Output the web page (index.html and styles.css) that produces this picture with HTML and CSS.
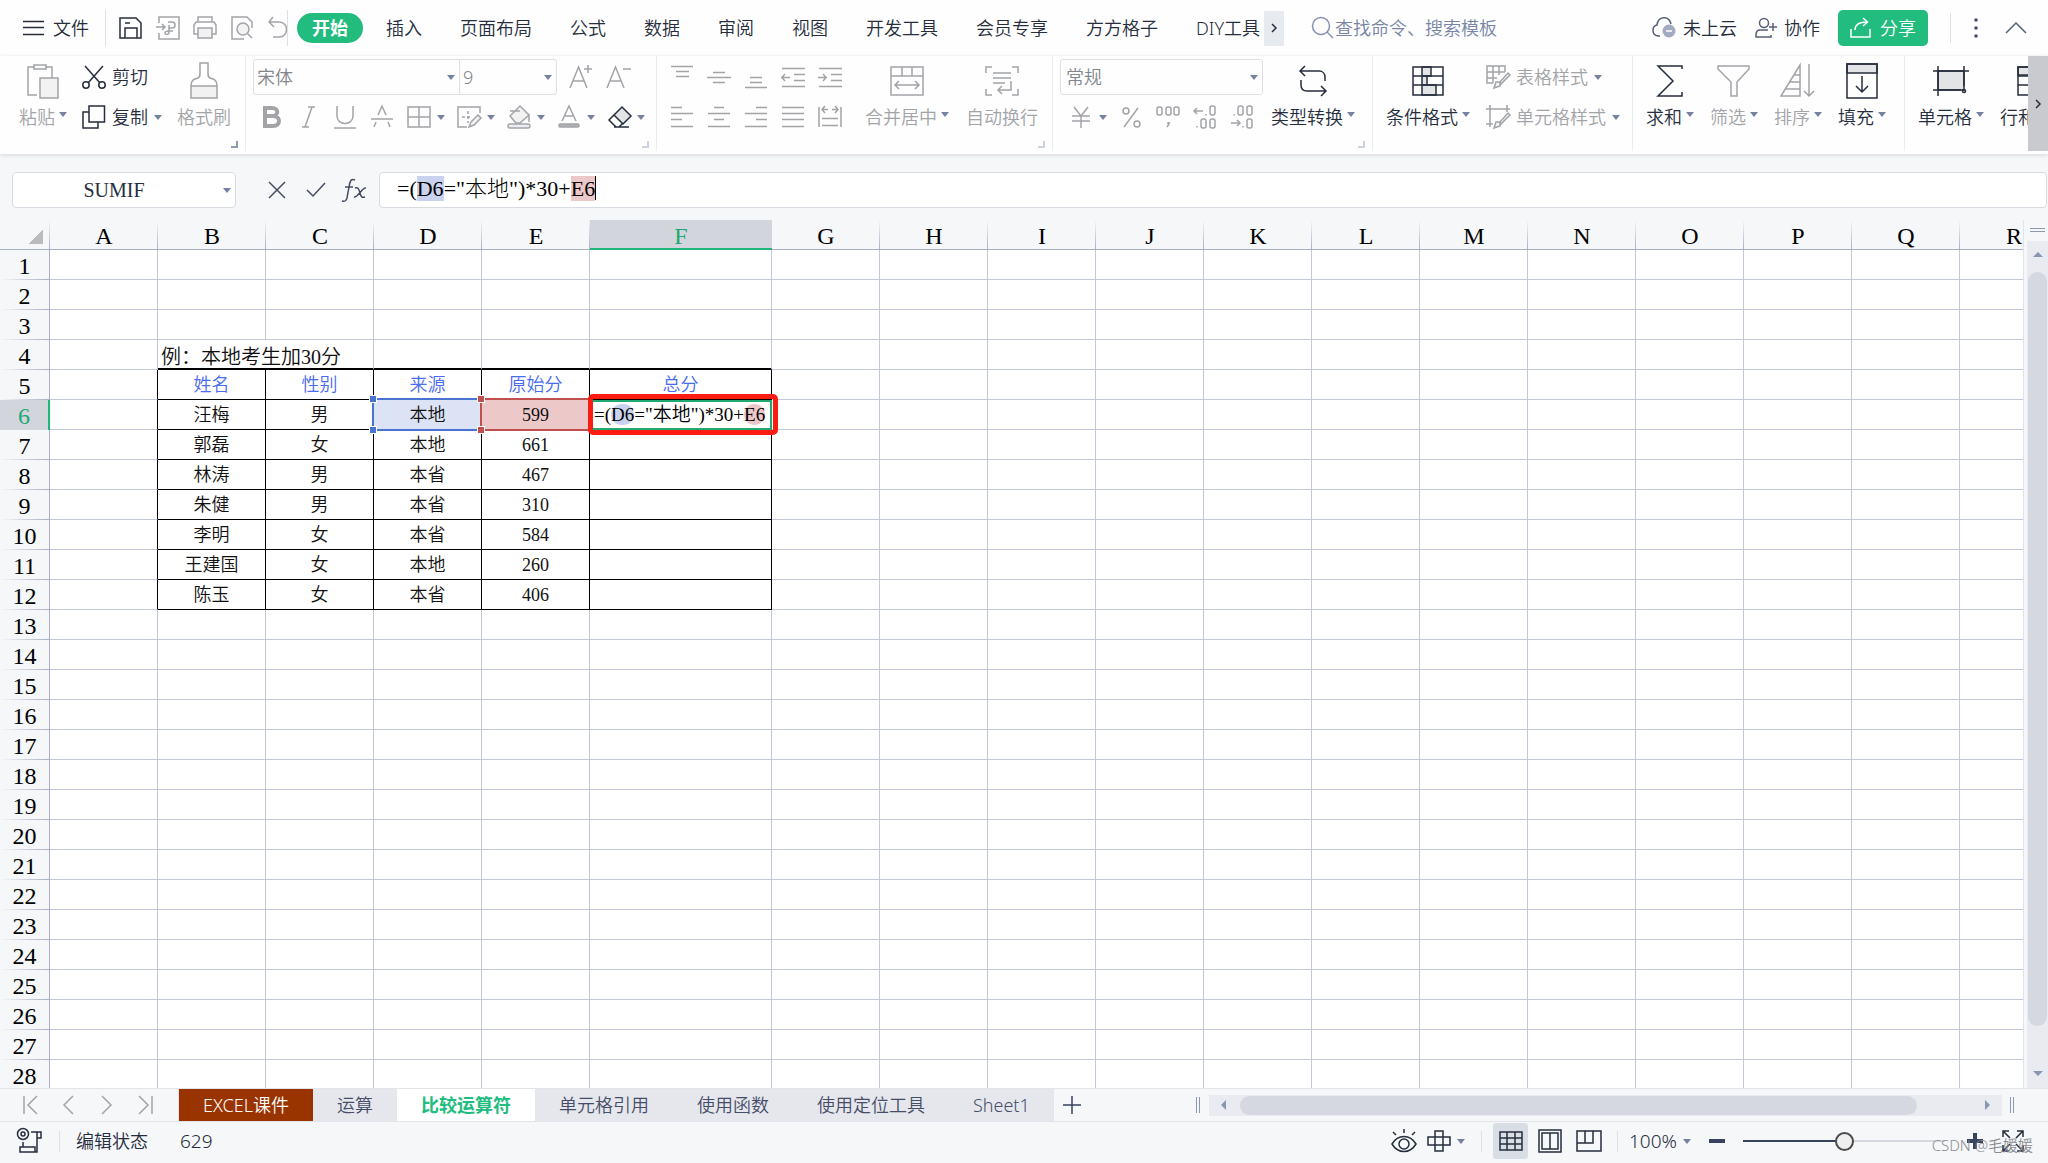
FILE: index.html
```html
<!DOCTYPE html>
<html lang="zh-CN">
<head>
<meta charset="utf-8">
<title>比较运算符 - 表格</title>
<link rel="stylesheet" href="styles.css">
</head>
<body>
<div class="app">

<header class="menu">
  <button class="file-btn dark"><svg class="ic" width="22" height="24"><path d="M0 5.500h21M0 11.500h21M0 18.500h21"/></svg>文件</button>
  <div class="quick">
    <button class="dark" aria-label="保存"><svg class="ic" width="24" height="24"><path d="M1 2h16l5 5v15H1zM6 22V12h12v10M6 7h5"/></svg></button>
    <button aria-label="输出为PDF"><svg class="ic" width="24" height="24"><path d="M3 7V1h20v22H3v-6M0 11h9M6 8l3 3-3 3M12 6h4c4 0 4 6 0 6h-3V9M13 12v4c0 3-4 3-4 1s2-2 4-2h4"/></svg></button>
    <button aria-label="打印"><svg class="ic" width="24" height="24"><path d="M5 6V1h14v5M5 18H1V9l2-3h18l2 3v9h-4"/><path class="tint" d="M5 12h14v10H5z"/></svg></button>
    <button aria-label="打印预览"><svg class="ic" width="24" height="24"><path d="M14 23H2V1h15l5 5v6"/><circle class="tint" cx="13" cy="13" r="6"/><path d="M17.500 17.500 22 22"/></svg></button>
    <button aria-label="撤销"><svg class="ic" width="24" height="24"><path d="M6 1 2 6l5 5M2 6h10c10 0 10 15 0 15H6"/></svg></button>
  </div>
  <nav class="tabs">
    <a class="tab on" href="#">开始</a><a class="tab" href="#">插入</a><a class="tab" href="#">页面布局</a><a class="tab" href="#">公式</a><a class="tab" href="#">数据</a><a class="tab" href="#">审阅</a><a class="tab" href="#">视图</a><a class="tab" href="#">开发工具</a><a class="tab" href="#">会员专享</a><a class="tab" href="#">方方格子</a><a class="tab last" href="#">DIY工具</a>
  </nav>
  <button class="more dark" aria-label="更多选项卡"><svg class="ic" width="8" height="10"><path d="m2 1 4 4-4 4"/></svg></button>
  <label class="search"><svg class="ic" width="22" height="24"><circle cx="10" cy="10" r="8.500"/><path d="m16 16 6 6"/></svg><input type="text" placeholder="查找命令、搜索模板" aria-label="查找命令"></label>
  <div class="account">
    <button class="dark"><svg class="ic slate" width="24" height="24"><path d="M8 20H6C-1 19 0 10 5 9 6 0 17-1 19 8"/><circle cx="17" cy="15" r="6.500" fill="#a3abc0" stroke="none"/><path d="M14 15h6" stroke="#fff"/></svg>未上云</button>
    <button class="dark"><svg class="ic slate" width="22" height="24"><circle cx="9" cy="7" r="4.500"/><path d="M13 14H5c-3 0-4 2-4 5v2h15v-2M14 11h8M18 7v8"/></svg>协作</button>
    <button class="share"><svg class="ic" width="21" height="22"><path d="M1 12v8h19v-8M5 13C5 8 9 5 17 5M13 1l4.500 4-4.500 4"/></svg>分享</button>
    <span class="vline"></span>
    <button class="slim dark" aria-label="更多"><svg width="6" height="24"><circle cx="3" cy="4" r="1.800"/><circle cx="3" cy="12" r="1.800"/><circle cx="3" cy="20" r="1.800"/></svg></button>
    <button class="slim" aria-label="收起功能区"><svg class="ic slate" width="22" height="14"><path d="m1 12 10-10 10 10"/></svg></button>
  </div>
</header>

<div class="ribbon">
  <div class="groups">
  <section class="group clip">
    <button class="tile"><span class="big"><svg class="ic" width="34" height="36"><path d="M11 32H2V4h6M20 4h6v11M8 2h12v4H8z"/><path class="tint" d="M14 15h18v20H14z"/></svg></span><span class="cap">粘贴<i class="caret"></i></span></button>
    <div class="stack">
      <button class="item dark"><svg class="ic" width="24" height="24"><path d="M3 1l15 17M21 1 6 18"/><circle cx="4" cy="20" r="3.200"/><circle cx="20" cy="20" r="3.200"/></svg>剪切</button>
      <button class="item dark"><svg class="ic" width="24" height="24"><path d="M7 7H1v16h15v-6M7 1h15.500v16H7z"/></svg>复制<i class="caret"></i></button>
    </div>
    <button class="tile"><span class="big"><svg class="ic" width="30" height="38"><path class="tint" d="M2 24h26v12H2z"/><path d="M2 24c0-6 3-7 7-8 2-1 2-2 2-5V1h8v10c0 3 0 4 2 5 4 1 7 2 7 8"/></svg></span><span class="cap">格式刷</span></button>
    <i class="launch strong"></i>
  </section>

  <section class="group font">
    <div class="rows">
      <div class="line">
        <div class="fontbox">
          <span class="drop wide"><select aria-label="字体"><option>宋体</option></select></span><span class="drop"><select aria-label="字号"><option>9</option></select></span>
        </div>
        <button class="sq" aria-label="增大字号"><svg class="ic" width="24" height="24"><path d="M1 23 9.500 2 18 23M4 16h11M15 4h8M19 0v8"/></svg></button>
        <button class="sq" aria-label="减小字号"><svg class="ic" width="25" height="24"><path d="M1 23 9.500 2 18 23M4 16h11M17 4h8"/></svg></button>
      </div>
      <div class="line icons">
        <button class="sq" aria-label="加粗"><svg class="ic heavy" width="24" height="24"><path d="M6 3h7c7 0 7 8 0 8H6zM6 11h8c8 0 8 10 0 10H6z"/></svg></button>
        <button class="sq" aria-label="倾斜"><svg class="ic" width="24" height="24"><path d="M12 2h7M6 22h7M16 2 9 22"/></svg></button>
        <button class="sq" aria-label="下划线"><svg class="ic" width="24" height="24"><path d="M4 1v10c0 10 16 10 16 0V1M1 23h22"/></svg></button>
        <button class="sq" aria-label="删除线"><svg class="ic" width="24" height="24"><path d="M8 10l4-9 4 9M1 14h22M6 17l-2 5M18 17l2 5"/></svg></button>
        <button class="sq dd" aria-label="边框"><svg class="ic" width="24" height="24"><path d="M1 2h22v20H1zM12 2v20M1 12h22"/></svg><i class="caret"></i></button>
        <button class="sq dd" aria-label="绘图边框"><svg class="ic" width="24" height="24"><path d="M1 20V2h22v6M1 20v2h9"/><path d="M11 6v12M5 12h10" stroke-dasharray="3 2"/><path class="tint" d="m12 22 2-5 7-7 3 3-7 7z"/></svg><i class="caret"></i></button>
        <button class="sq dd" aria-label="填充颜色"><svg class="ic" width="24" height="24"><path class="tint" d="m3 11 10-10 9 9-9 8h-4zM3 6h10M22 9v8"/><rect x="1" y="19" width="22" height="4" rx="2" fill="#eceef2"/></svg><i class="caret"></i></button>
        <button class="sq dd" aria-label="字体颜色"><svg class="ic" width="24" height="24"><path d="m5 16 7-15 7 15M8 11h8"/><rect x="2" y="19" width="20" height="3" rx="1" fill="#b0b2b4"/></svg><i class="caret"></i></button>
        <button class="sq dd dark" aria-label="清除"><svg class="ic" width="24" height="24"><path class="grayfill" d="m7 10 8-8 9 9-8 8z"/><path d="m7 10-5 5 7 7h3l4-4M7 22h15"/></svg><i class="caret"></i></button>
      </div>
    </div>
    <i class="launch"></i>
  </section>

  <section class="group align">
    <div class="alignpad">
      <button class="sq" aria-label="顶端对齐"><svg class="ic" width="24" height="24"><path d="M1 1.500h22M6 6.500h13M6 11.500h13"/></svg></button>
      <button class="sq" aria-label="垂直居中"><svg class="ic" width="24" height="24"><path d="M6 7.500h12M0 12.500h24M6 17.500h12"/></svg></button>
      <button class="sq" aria-label="底端对齐"><svg class="ic" width="24" height="24"><path d="M6 12.500h12M6 17.500h12M1 22.500h22"/></svg></button>
      <button class="sq" aria-label="减少缩进"><svg class="ic" width="24" height="24"><path d="M1 3.500h23M13 9.500h11M13 15.500h11M1 21.500h23M0 12.500h9M4 9l-3 3.500 3 3.500"/></svg></button>
      <button class="sq" aria-label="增加缩进"><svg class="ic" width="24" height="24"><path d="M1 3.500h23M13 9.500h11M13 15.500h11M1 21.500h23M0 12.500h9M5 9l3 3.500-3 3.500"/></svg></button>
      <button class="sq" aria-label="左对齐"><svg class="ic" width="24" height="24"><path d="M1 2.500h11M1 8.500h22M1 14.500h11M1 21.500h22"/></svg></button>
      <button class="sq" aria-label="居中"><svg class="ic" width="24" height="24"><path d="M7 2.500h10M1 8.500h22M7 14.500h10M1 21.500h22"/></svg></button>
      <button class="sq" aria-label="右对齐"><svg class="ic" width="24" height="24"><path d="M12 2.500h11M1 8.500h22M12 14.500h11M1 21.500h22"/></svg></button>
      <button class="sq" aria-label="两端对齐"><svg class="ic" width="24" height="24"><path d="M1 2.500h22M1 8.500h22M1 14.500h22M1 21.500h22"/></svg></button>
      <button class="sq" aria-label="分散对齐"><svg class="ic" width="24" height="24"><path d="M1 2v20M23 2v20M4 4.500h6M20 4.500h-6M7 1 4 4.500 7 8M17 1l3 3.500L17 8M4 13.500h16M4 20.500h16"/></svg></button>
    </div>
    <button class="tile"><span class="big"><svg class="ic" width="34" height="30"><path d="M1 1h32v28H1zM1 10h32M12 1v9M22 1v9M6 19h22M9 15l-4 4 4 4M25 15l4 4-4 4"/></svg></span><span class="cap">合并居中<i class="caret"></i></span></button>
    <button class="tile"><span class="big"><svg class="ic" width="34" height="30"><path d="M1 7V1h6M27 1h6v6M1 23v6h6M27 29h6v-6M8 7h18M8 12h18M8 17h12M26 15v9H13M17 20l-4 4 4 4"/></svg></span><span class="cap">自动换行</span></button>
    <i class="launch"></i>
  </section>

  <section class="group number">
    <div class="rows">
      <div class="line"><span class="drop numfmt"><select aria-label="数字格式"><option>常规</option></select></span></div>
      <div class="line icons">
        <button class="sq dd" aria-label="货币"><svg class="ic" width="24" height="24"><path d="m5 2 7 9 7-9M12 11v12M3 11h18M3 16h18"/></svg><i class="caret"></i></button>
        <button class="sq" aria-label="百分比"><svg class="ic" width="24" height="24"><path d="M19 3 5 22"/><circle cx="7" cy="6" r="3"/><circle cx="18" cy="19" r="3"/></svg></button>
        <button class="sq" aria-label="千位分隔"><svg class="ic" width="24" height="24"><rect x="1" y="2" width="5" height="8" rx="2"/><rect x="10" y="2" width="5" height="8" rx="2"/><rect x="18" y="2" width="5" height="8" rx="2"/><path d="M13 17v2l-2 3M12 17v2"/></svg></button>
        <button class="sq" aria-label="增加小数位"><svg class="ic" width="24" height="24"><path d="M1 6h9M4 3 1 6l3 3M13 9v1.500M4 21v1.500"/><rect x="17" y="1" width="5" height="9" rx="2"/><rect x="8" y="14" width="5" height="9" rx="2"/><rect x="17" y="14" width="5" height="9" rx="2"/></svg></button>
        <button class="sq" aria-label="减少小数位"><svg class="ic" width="24" height="24"><path d="M1 18h9M7 15l3 3-3 3M4 9v1.500M13 21v1.500"/><rect x="8" y="1" width="5" height="9" rx="2"/><rect x="17" y="1" width="5" height="9" rx="2"/><rect x="17" y="14" width="5" height="9" rx="2"/></svg></button>
      </div>
    </div>
    <button class="tile dark"><span class="big"><svg class="ic" width="28" height="32"><path d="M1 6h19c4 0 6 3 6 6v4M6 1 1 6l5 5M2 15v5c0 4 2 6 6 6h18M22 21l5 5-5 5"/></svg></span><span class="cap">类型转换<i class="caret"></i></span></button>
    <i class="launch"></i>
  </section>

  <section class="group styles">
    <button class="tile dark"><span class="big"><svg class="ic" width="32" height="30"><path class="grayfill" d="M10 1h9v9h-9zM10 10h5v9h-5zM10 19h14v10H10z"/><path d="M1 1h30v28H1zM1 10h30M1 19h30"/></svg></span><span class="cap">条件格式<i class="caret"></i></span></button>
    <div class="stack">
      <button class="item"><svg class="ic" width="24" height="24"><path d="M7 18H1V1h18v6M1 7h18M1 13h10M7 1v17M13 1v9"/><path class="tint" d="m8 23 2-6h4v4zM14 17l8-9 2 2-9 9z"/></svg>表格样式<i class="caret"></i></button>
      <button class="item"><svg class="ic" width="24" height="24"><path d="M0 4h24M4 0v22M21 0v7M0 19h7"/><path class="tint" d="m8 23 2-6h4v4zM14 17l8-9 2 2-9 9z"/></svg>单元格样式<i class="caret"></i></button>
    </div>
  </section>

  <section class="group edit">
    <button class="tile dark"><span class="big"><svg class="ic" width="28" height="32"><path d="M26 4V1H2l15 15L2 31h24v-4"/></svg></span><span class="cap">求和<i class="caret"></i></span></button>
    <button class="tile"><span class="big"><svg class="ic" width="34" height="34"><path d="M1 2h31v3L20 18v14h-6V18L1 5z"/></svg></span><span class="cap">筛选<i class="caret"></i></span></button>
    <button class="tile"><span class="big"><svg class="ic" width="36" height="34"><path d="M1 32 20 1v31zM14 11h6M10 18h10M5 25h15M29 0v32M24 27l5 5 5-5"/></svg></span><span class="cap">排序<i class="caret"></i></span></button>
    <button class="tile dark"><span class="big"><svg class="ic" width="32" height="36"><path class="grayfill" d="M1 1h30v9H1z"/><path d="M1 1h30v34H1zM16 13v16M10 23l6 6 6-6"/></svg></span><span class="cap">填充<i class="caret"></i></span></button>
  </section>

  <section class="group cells">
    <button class="tile dark"><span class="big"><svg class="ic" width="36" height="30"><path class="grayfill" d="M5 5h26v19H5z"/><path d="M0 5h36M5 0v30M31 0v20M0 24h28" /><circle cx="31" cy="25" r="1.500"/></svg></span><span class="cap">单元格<i class="caret"></i></span></button>
    <button class="tile dark"><span class="big"><svg class="ic" width="32" height="30"><path class="grayfill" d="M1 1h30v8H1z"/><path d="M1 1h30v28H1zM1 10h30M1 19h30M16 1v28"/></svg></span><span class="cap">行和列<i class="caret"></i></span></button>
  </section>
  </div>
  <button class="scroll-more dark" aria-label="向右滚动"><svg class="ic" width="8" height="10"><path d="m2 1 4 4-4 4"/></svg></button>
</div>

<div class="fbar">
  <div class="namebox"><input type="text" value="SUMIF" aria-label="名称框"><i class="caret"></i></div>
  <div class="factions">
    <button aria-label="取消"><svg class="ic" width="18" height="18"><path d="m1 1 16 16M17 1 1 17"/></svg></button>
    <button aria-label="输入"><svg class="ic" width="20" height="18"><path d="m1 9 6 6L19 2"/></svg></button>
    <button aria-label="插入函数"><svg class="ic" width="26" height="26"><path d="M13 3c-4-2-5 1-6 7L5 21c-1 3-2 4-5 3M3 10h8M13 11c3-1 4 1 5 5s2 5 5 4M24 11c-4-1-8 10-12 9"/></svg></button>
  </div>
  <div class="formula" contenteditable="true" role="textbox" aria-label="编辑栏">=(<span class="ref-d">D6</span>="本地")*30+<span class="ref-e">E6</span><i class="cursor"></i></div>
</div>

<main class="work">
  <div class="grid">
    <table>
      <colgroup id="cols"></colgroup>
      <thead id="head"></thead>
      <tbody id="body"></tbody>
    </table>
  </div>
  <div class="vbar">
    <span class="split"></span>
    <div class="vtrack"><i class="arrow up"></i><span class="thumb"></span><i class="arrow down"></i></div>
  </div>
</main>

<div class="sheets">
  <div class="nav">
    <button aria-label="第一张"><svg class="ic" width="16" height="20"><path d="M2 1v18M15 1 6 10l9 9"/></svg></button>
    <button aria-label="上一张"><svg class="ic" width="16" height="20"><path d="M12 1 3 10l9 9"/></svg></button>
    <button aria-label="下一张"><svg class="ic" width="16" height="20"><path d="m3 1 9 9-9 9"/></svg></button>
    <button aria-label="最后一张"><svg class="ic" width="16" height="20"><path d="m1 1 9 9-9 9M14 1v18"/></svg></button>
  </div>
  <button class="sheet rust">EXCEL课件</button><button class="sheet">运算</button><button class="sheet on">比较运算符</button><button class="sheet">单元格引用</button><button class="sheet">使用函数</button><button class="sheet">使用定位工具</button><button class="sheet">Sheet1</button>
  <button class="add" aria-label="新建工作表"><svg class="ic" width="20" height="20"><path d="M10 1v18M1 10h18"/></svg></button>
  <span class="bars"></span>
  <div class="htrack"><i class="arrow left"></i><span class="thumb"></span><i class="arrow right"></i></div>
  <span class="bars end"></span>
</div>

<footer class="status">
  <button class="dark" aria-label="宏"><svg class="ic" width="26" height="26"><circle cx="6" cy="6" r="5.500"/><circle cx="6" cy="6" r="2"/><path d="M6 14v5M3 19h15v5H3zM14 4h10v6h-4M20 4v20h-2"/></svg></button>
  <span class="vline"></span>
  <span class="state">编辑状态</span><span class="num">629</span>
  <div class="views">
    <button class="dark" aria-label="护眼模式"><svg class="ic" width="26" height="24"><path d="M1 15C7 5 19 5 25 15 19 25 7 25 1 15zM13 0v4M2 3l3 3M24 3l-3 3"/><circle cx="13" cy="15" r="5"/></svg></button>
    <button class="dark dd" aria-label="阅读模式"><svg class="ic" width="24" height="24"><path d="M8 2h8v20H8zM1 8h22v8H1z"/></svg><i class="caret"></i></button>
    <span class="vline"></span>
    <div class="modes">
      <button class="dark on" aria-label="普通视图"><svg class="ic" width="24" height="20"><path d="M1 1h22v18H1zM1 7h22M1 13h22M8 1v18M16 1v18"/></svg></button>
      <button class="dark" aria-label="页面布局"><svg class="ic" width="24" height="24"><path d="M1 1h22v22H1zM4 4h16v16H4zM12 4v16"/></svg></button>
      <button class="dark" aria-label="分页预览"><svg class="ic" width="26" height="22"><path d="M1 1h24v20H1zM1 13h16V1M9 1v12"/></svg></button>
    </div>
    <span class="vline"></span>
    <button class="zoom dark dd">100%<i class="caret"></i></button>
    <button class="dark" aria-label="缩小"><svg class="ic thick" width="16" height="16"><path d="M0 8h16"/></svg></button>
    <input class="slider" type="range" min="0" max="100" value="50" aria-label="缩放">
    <div class="tail">
      <button class="dark" aria-label="放大"><svg class="ic thick" width="16" height="16"><path d="M0 8h16M8 0v16"/></svg></button>
      <button class="dark" aria-label="全屏"><svg class="ic" width="24" height="24"><path d="M2 8V2h6M16 2h6v6M2 16v6h6M16 22h6v-6M2 2l7 7M22 2l-7 7M2 22l7-7M22 22l-7-7"/></svg></button>
      <span class="mark">CSDN @毛媛媛</span>
    </div>
  </div>
</footer>
</div>
<script src="script.js"></script>
</body>
</html>
```
FILE: styles.css
```css
* { box-sizing: border-box; }
body { margin: 0; background: #f5f7f9; color: #262d3d; font: 350 18px/24px "Noto Sans", "Noto Sans CJK SC", sans-serif; }
button, input, select { font: inherit; color: inherit; border: 0; background: none; padding: 0; margin: 0; }
button { display: flex; align-items: center; color: #a2a4a8; white-space: nowrap; flex: none; }
a { color: inherit; text-decoration: none; }
svg { display: block; flex: none; overflow: visible; }
i { font-style: normal; }
.ic { fill: none; stroke: currentColor; stroke-width: 1.5; }
.ic.heavy { stroke-width: 4; }
.ic.thick { stroke-width: 4; stroke: #38435f; }
.ic.slate { color: #566078; }
.tint { fill: #f2f2f3; }
.grayfill { fill: #e3e4e6; }
.dark { color: #262d3d; }
.caret { width: 8px; border: 4px solid transparent; border-top: 5px solid #7482a0; border-bottom: 0; flex: none; }
.vline { width: 1px; height: 30px; background: #dfe1e5; flex: none; }

.app { display: flex; flex-direction: column; height: 100vh; overflow: hidden; }

/* menu bar */
.menu { display: flex; align-items: center; height: 56px; padding: 0 21px 0 23px; background: #fefefe; flex: none; }
.file-btn { gap: 8px; padding-right: 16px; height: 36px; border-right: 1px solid #dfe1e5; }
.quick { display: flex; align-items: center; gap: 13px; width: 182px; height: 36px; padding-left: 13px; overflow: hidden; border-right: 1px solid #dfe1e5; flex: none; }
.tabs { display: flex; gap: 8px; padding-left: 9px; flex: none; }
.tab { padding: 3px 15px; border-radius: 15px; }
.tab.on { background: #21bc7e; color: #fff; font-weight: 700; }
.tab.last { padding-right: 4px; }
.more { width: 20px; height: 35px; justify-content: center; background: #e7eaef; }
.search { display: flex; align-items: center; gap: 2px; margin-left: 27px; color: #8592b0; }
.search input { width: 180px; }
.search input::placeholder { color: #7784a5; opacity: 1; }
.account { display: flex; align-items: center; gap: 18px; margin-left: auto; }
.account button { gap: 7px; }
.account .share { gap: 9px; height: 36px; padding: 0 12px; border-radius: 5px; background: #21bc7e; color: #fff; }
.account .vline { margin: 0 4px; }
.slim + .slim { margin-left: 8px; }
.slim svg { fill: #4a5162; }
.slim .ic { fill: none; }

/* ribbon */
.ribbon { display: flex; height: 98px; background: #fefefe; box-shadow: 0 1px 4px #d4d6da; flex: none; z-index: 1; }
.groups { display: flex; flex: 1; min-width: 0; overflow: hidden; }
.group { position: relative; display: flex; align-items: flex-start; flex: none; padding-top: 1px; height: 95px; border-right: 1px solid #ebecee; }
.clip { padding-left: 19px; padding-right: 14px; gap: 15px; }
.font { padding-left: 7px; padding-right: 11px; }
.align { padding-left: 13px; padding-right: 14px; gap: 17px; }
.number { padding-left: 7px; padding-right: 17px; gap: 8px; }
.styles { padding-left: 13px; padding-right: 12px; gap: 16px; }
.edit { padding-left: 13px; padding-right: 18px; gap: 16px; }
.cells { padding-left: 13px; gap: 16px; border-right: 0; }
.tile { flex-direction: column; }
.big { display: flex; align-items: center; justify-content: center; height: 48px; }
.cap { display: flex; align-items: center; gap: 4px; }
.cap .caret { margin-bottom: 6px; }
.stack, .rows { display: flex; flex-direction: column; }
.item { height: 40px; gap: 6px; }
.line { display: flex; align-items: center; gap: 12px; height: 40px; }
.icons { padding-left: 6px; }
.number .icons { padding-left: 9px; }
.sq { width: 25px; height: 24px; }
.sq.dd { width: 38px; gap: 6px; }
.fontbox { display: flex; border: 1px solid #dfe0e3; border-radius: 3px; }
.drop { position: relative; display: block; width: 96px; height: 34px; }
.drop.wide { width: 206px; border-right: 1px solid #dfe0e3; }
.drop.numfmt { width: 203px; height: 36px; border: 1px solid #dfe0e3; border-radius: 3px; }
.drop select { appearance: none; width: 100%; height: 100%; padding-left: 3px; color: #83868c; }
.drop.numfmt select { padding-left: 5px; }
.drop::after { content: ""; position: absolute; right: 4px; top: 15px; border: 4px solid transparent; border-top: 5px solid #7482a0; border-bottom: 0; }
.launch { position: absolute; right: 7px; bottom: 3px; width: 7px; height: 7px; border: solid #ccd3e2; border-width: 0 2px 2px 0; }
.launch.strong { border-color: #8d99b5; }
.alignpad { display: grid; grid-template-columns: repeat(5, 25px); grid-auto-rows: 24px; gap: 16px 12px; padding: 8px 5px 0 0; }
.scroll-more { width: 20px; height: 95px; justify-content: center; background: #c8cacf; }

/* formula bar */
.fbar { display: flex; padding: 18px 1px 12px 12px; flex: none; }
.namebox { display: flex; align-items: center; width: 224px; height: 36px; padding-right: 4px; border: 1px solid #d8dbe1; border-radius: 4px; background: #fff; }
.namebox input { flex: 1; min-width: 0; padding-right: 8px; text-align: center; font: 20px/24px "Liberation Serif", serif; }
.factions { display: grid; grid-template-columns: repeat(3, 39px); padding: 0 5px 0 21px; }
.factions button { justify-content: center; color: #454d63; }
.formula { display: flex; flex: 1; align-items: flex-start; padding: 3px 0 0 17px; border: 1px solid #d8dbe1; border-radius: 4px; background: #fff; color: #000; font: 300 22px/25px "Liberation Serif", "Noto Sans CJK SC", serif; white-space: nowrap; outline: 0; }
.ref-d { background: #c9d3f0; }
.ref-e { background: #ecc8c8; }
.cursor { width: 1px; height: 24px; background: #000; }

/* worksheet grid */
.work { display: flex; flex: 1; min-height: 0; }
.grid { flex: 1; min-width: 0; overflow: hidden; border-right: 1px solid #e0e3ea; }
table { table-layout: fixed; border-collapse: separate; border-spacing: 0; width: 2068px; background: #fff; font-family: "Liberation Serif", "Noto Sans CJK SC", serif; }
th, td { height: 30px; padding: 0; overflow: hidden; }
th { font: 24px/24px "Liberation Serif", serif; color: #000; background-color: #f5f7f9; background-repeat: no-repeat; }
.ch { padding-top: 3px; border-bottom: 1px solid #a9b0c6; background-image: linear-gradient(#f5f7f9, #a9b0c6); background-size: 1px 100%; background-position: right; }
.rh { padding-top: 2px; border-right: 1px solid #a9b0c6; background-image: linear-gradient(90deg, #f5f7f9, #a9b0c6); background-size: 100% 1px; background-position: bottom; }
.ch.on { background: #d2d5dc; color: #21a873; border-bottom: 2px solid #21b57a; }
.rh.on { background: #d2d5dc; color: #21a873; border-right: 2px solid #21b57a; }
.corner::after { content: ""; display: block; width: 15px; height: 15px; margin-left: 28px; background: linear-gradient(135deg, transparent 50%, #b9bbbe 50%); }
td { font-size: 18px; line-height: 24px; padding-top: 1px; text-align: center; color: #111; border-right: 1px solid #c3c8d9; border-bottom: 1px solid #c3c8d9; white-space: nowrap; }
.title { text-align: left; font-size: 20px; line-height: 20px; padding: 6px 0 0 3px; }
.kr { border-right-color: #000; }
.kb { border-bottom-color: #000; }
.kb2 { border-bottom: 2px solid #000; }
.hd { color: #4a6cf0; }
.pick { position: relative; overflow: visible; }
.pick::after { content: ""; position: absolute; inset: -2px -1px -2px -2px; border: 2px solid; pointer-events: none; }
.pd { background: #dce3f5; }
.pd::after { border-color: #4a72cf; }
.pe { background: #ecc8c8; }
.pe::after { border-color: #c0504d; }
.knob { position: absolute; z-index: 1; left: -4px; width: 6px; height: 6px; outline: 1px solid #fff; }
.knob.t { top: -4px; }
.knob.b { bottom: -4px; }
.pd .knob { background: #4a72cf; }
.pe .knob { background: #c0504d; }
.edit-cell { position: relative; overflow: visible; padding-left: 4px; text-align: left; font-size: 19px; color: #000; }
.edit-cell span { border-radius: 10px; }
.edit-cell::before { content: ""; position: absolute; inset: 0 -1px -1px 0; border: 2px solid #21a873; }
.edit-cell::after { content: ""; position: absolute; z-index: 2; inset: -6px -7px -6px -2px; border: 5px solid #fb1d12; border-radius: 5px; }

/* scroll bars */
.vbar { display: flex; flex-direction: column; width: 24px; padding-left: 3px; }
.split { height: 4px; margin: 8px 3px 9px; border: solid #8d99b2; border-width: 1px 0; }
.vtrack { display: flex; flex: 1; flex-direction: column; align-items: center; padding: 11px 0 12px; background: #e9ebf0; }
.vtrack .thumb { width: 19px; flex: 1; margin: 15px 0 45px; border-radius: 10px; background: #d5d8e0; }
.arrow { border: 5px solid transparent; flex: none; }
.up { border-top: 0; border-bottom-color: #8996b2; }
.down { border-bottom: 0; border-top-color: #8996b2; }
.left { border-left: 0; border-right-color: #8996b2; }
.right { border-right: 0; border-left-color: #8996b2; }

/* sheet tabs */
.sheets { display: flex; align-items: center; height: 34px; border: solid #e2e4ea; border-width: 1px 0; flex: none; }
.nav { display: flex; justify-content: space-between; width: 179px; height: 32px; padding: 0 24px 0 22px; border-right: 1px solid #e2e4ea; flex: none; }
.sheet { height: 32px; padding: 0 24px; background: #e6e7ed; color: #454d68; }
.rust { background: #993300; color: #fff; }
.sheet.on { background: #fff; color: #21bc7e; font-weight: 700; }
.add { width: 36px; height: 32px; justify-content: center; color: #38435f; }
.bars { width: 4px; height: 16px; margin: 0 9px 0 auto; border: solid #8d99b2; border-width: 0 1px; }
.bars.end { margin: 0 34px 0 8px; }
.htrack { display: flex; align-items: center; flex: 0 1 793px; height: 21px; padding: 0 12px; background: #e9ebf0; }
.htrack .thumb { flex: 1; height: 19px; margin: 0 68px 0 14px; border-radius: 10px; background: #d5d8e0; }

/* status bar */
.status { display: flex; align-items: center; height: 41px; padding: 0 23px 3px 17px; flex: none; }
.status .vline { height: 21px; margin: 0 16px; }
.num { margin-left: 32px; font-size: 19px; }
.dd { gap: 6px; }
.views { display: flex; align-items: center; margin-left: auto; }
.views > .dd { margin: 0 5px 0 10px; }
.views > .vline + .dd { margin: 0 18px 0 0; font-size: 19px; }
.views .vline { margin: 0 11px; }
.modes { display: flex; gap: 4px; }
.modes button { width: 35px; height: 36px; justify-content: center; border-radius: 3px; }
.modes .on { background: #d9dee5; }
.slider { appearance: none; width: 202px; height: 20px; margin: 0 22px 0 18px; background: linear-gradient(90deg, #38435f 50%, #d5d8e0 50%) center / 100% 2px no-repeat; }
.slider::-webkit-slider-thumb { appearance: none; width: 19px; height: 19px; border: 2px solid #4c4c4c; border-radius: 50%; background: #f0f0f0; }
.tail { position: relative; display: flex; gap: 18px; }
.mark { position: absolute; right: -8px; top: 4px; font-size: 15px; color: #8b8d92; white-space: nowrap; }
```
FILE: script.js
```js
const letters = 'ABCDEFGHIJKLMNOPQR'.split('');
const data = {
  5: ['姓名', '性别', '来源', '原始分', '总分'],
  6: ['汪梅', '男', '本地', '599', ''],
  7: ['郭磊', '女', '本地', '661', ''],
  8: ['林涛', '男', '本省', '467', ''],
  9: ['朱健', '男', '本省', '310', ''],
  10: ['李明', '女', '本省', '584', ''],
  11: ['王建国', '女', '本地', '260', ''],
  12: ['陈玉', '女', '本省', '406', '']
};
const knobs = '<i class="knob t"></i><i class="knob b"></i>';

document.getElementById('cols').innerHTML =
  '<col style="width:50px">' + letters.map(l => `<col style="width:${l === 'F' ? 182 : 108}px">`).join('');
document.getElementById('head').innerHTML =
  '<tr><th class="ch corner"></th>' +
  letters.map(l => `<th class="ch${l === 'F' ? ' on' : ''}" scope="col">${l}</th>`).join('') + '</tr>';

let html = '';
for (let r = 1; r <= 28; r++) {
  html += `<tr><th class="rh${r === 6 ? ' on' : ''}" scope="row">${r}</th>`;
  letters.forEach((l, c) => {
    const cls = [];
    let text = '', span = '';
    if (r === 4 && l === 'C') return;
    if (r === 4 && l === 'B') { text = '例：本地考生加30分'; span = ' colspan="2"'; cls.push('title'); }
    if (r === 4 && c >= 1 && c <= 5) cls.push('kb2');
    if (data[r]) {
      if (c <= 5) cls.push('kr');
      if (c >= 1 && c <= 5) { cls.push('kb'); text = data[r][c - 1]; }
      if (r === 5) cls.push('hd');
    }
    if (r === 6 && l === 'D') { cls.push('pick', 'pd'); text += knobs; }
    if (r === 6 && l === 'E') { cls.push('pick', 'pe'); text += knobs; }
    if (r === 6 && l === 'F') {
      cls.push('edit-cell');
      text = '=(<span class="ref-d">D6</span>="本地")*30+<span class="ref-e">E6</span>';
    }
    html += `<td${span} class="${cls.join(' ')}">${text}</td>`;
  });
  html += '</tr>';
}
document.getElementById('body').innerHTML = html;
```
